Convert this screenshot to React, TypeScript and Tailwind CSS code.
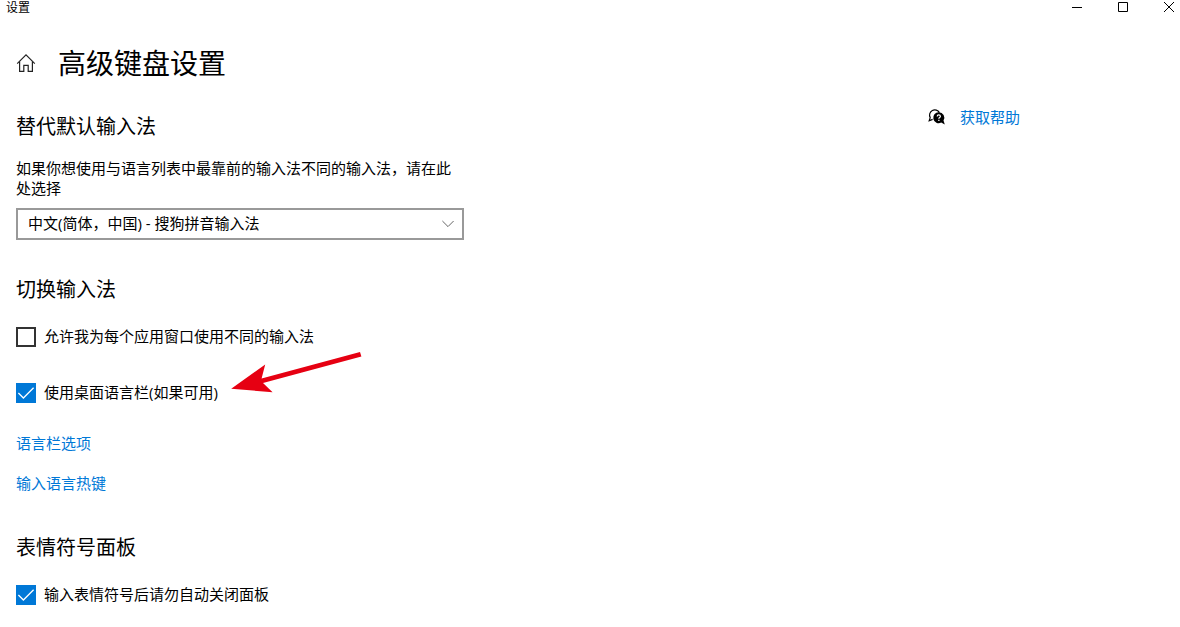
import { useState } from 'react'
import type { ReactNode } from 'react'

function HomeIcon() {
  return (
    <svg width="20" height="20" viewBox="0 0 20 20" fill="none" stroke="#222" strokeWidth="1.2">
      <path d="M1.2 10.6 10 1.8l8.8 8.8" />
      <path d="M3.6 8.6v9.8h4.2v-6h4.4v6h4.2V8.6" />
    </svg>
  )
}

function HelpIcon() {
  return (
    <svg width="18" height="18" viewBox="0 0 18 18" fill="none">
      <path d="M4.6 11.4 1.2 12.8l1-3.2A5.1 5.1 0 1 1 11.4 4.6" stroke="#000" strokeWidth="1.2" />
      <path d="M10.8 4.2a5.5 5.5 0 1 0 2.4 10.4l3.6 2-1.3-4A5.5 5.5 0 0 0 10.8 4.2Z" fill="#000" />
      <path d="M9.2 8.4c0-2 3.2-2 3.2 0 0 1.2-1.6 1.1-1.6 2.4" stroke="#fff" strokeWidth="1.2" />
      <path d="M10.2 11.8h1.3v1.3h-1.3z" fill="#fff" />
    </svg>
  )
}

function Arrow() {
  return (
    <svg
      className="absolute -top-9 left-52 pointer-events-none"
      width="144"
      height="48"
      viewBox="224 347 144 48"
      aria-hidden="true"
    >
      <path d="M231.2 388.8 265.2 364.4 261.6 378.6 360 351.9 361.4 356.5 263 383 272.6 392.2Z" fill="#e60012" />
    </svg>
  )
}

function TitleBar() {
  return (
    <div className="flex h-4 items-start justify-between pl-1.5">
      <span className="text-xs leading-4">设置</span>
      <div className="flex gap-6">
        <button type="button" aria-label="最小化" className="flex h-4 w-[22px] justify-center pt-0.5">
          <svg width="10" height="10" viewBox="0 0 10 10" stroke="#000">
            <path d="M0 5.5h10" />
          </svg>
        </button>
        <button type="button" aria-label="最大化" className="flex h-4 w-[22px] justify-center pt-0.5">
          <svg width="10" height="10" viewBox="0 0 10 10" fill="none" stroke="#000">
            <path d="M.5.5h9v9h-9z" />
          </svg>
        </button>
        <button type="button" aria-label="关闭" className="flex h-4 w-[22px] justify-center pt-0.5">
          <svg width="10" height="10" viewBox="0 0 10 10" stroke="#000">
            <path d="m0 0 10 10M10 0 0 10" />
          </svg>
        </button>
      </div>
    </div>
  )
}

function SectionTitle({ children }: { children: ReactNode }) {
  return <h2 className="text-xl leading-7">{children}</h2>
}

function CheckRow({ label, initial = false }: { label: string; initial?: boolean }) {
  const [checked, setChecked] = useState(initial)
  return (
    <label className="flex items-start gap-2 leading-[18px]">
      <span className="relative size-5 shrink-0">
        <input
          type="checkbox"
          checked={checked}
          onChange={(e) => setChecked(e.target.checked)}
          className="block size-5 appearance-none border-2 border-[#333] bg-white checked:border-[#0078d7] checked:bg-[#0078d7]"
        />
        {checked && (
          <svg className="absolute inset-0 pointer-events-none" width="20" height="20" viewBox="0 0 20 20" fill="none">
            <path d="m2.4 10 5 5L17.6 4.8" stroke="#fff" strokeWidth="1.3" />
          </svg>
        )}
      </span>
      {label}
    </label>
  )
}

export default function App() {
  return (
    <div className="min-h-screen bg-white text-[15px] text-black font-['Open_Sans','Noto_Sans_CJK_SC',sans-serif]" lang="zh-CN">
      <TitleBar />

      <header className="mt-[23px] flex h-12 items-center gap-[22px] px-4">
        <a href="#home" aria-label="主页">
          <HomeIcon />
        </a>
        <h1 className="text-[28px] leading-10">高级键盘设置</h1>
      </header>

      <div className="flex items-start justify-between pr-40 pl-4">
        <main className="w-[448px] pt-[26px] pb-5">
          <section>
            <SectionTitle>替代默认输入法</SectionTitle>
            <label htmlFor="default-ime" className="mt-[17px] block leading-5">
              如果你想使用与语言列表中最靠前的输入法不同的输入法，请在此处选择
            </label>
            <div className="relative mt-2.5">
              <select
                id="default-ime"
                className="block h-8 w-full appearance-none border-2 border-[#999] bg-white pr-8 pb-0.5 pl-2.5"
              >
                <option>中文(简体，中国) - 搜狗拼音输入法</option>
              </select>
              <svg
                className="absolute top-2.5 right-2.5 pointer-events-none"
                width="12"
                height="12"
                viewBox="0 0 12 12"
                fill="none"
                stroke="#666"
              >
                <path d="m.4 3 5.6 5.6L11.6 3" />
              </svg>
            </div>
          </section>

          <section className="mt-9">
            <SectionTitle>切换输入法</SectionTitle>
            <div className="mt-[23px]">
              <CheckRow label="允许我为每个应用窗口使用不同的输入法" />
            </div>
            <div className="relative mt-9">
              <CheckRow label="使用桌面语言栏(如果可用)" initial />
              <Arrow />
            </div>
            <div className="mt-[30px] flex flex-col items-start gap-5 leading-5 text-[#0078d7]">
              <a href="#language-bar">语言栏选项</a>
              <a href="#hotkeys">输入语言热键</a>
            </div>
          </section>

          <section className="mt-[41px]">
            <SectionTitle>表情符号面板</SectionTitle>
            <div className="mt-[23px]">
              <CheckRow label="输入表情符号后请勿自动关闭面板" initial />
            </div>
          </section>
        </main>

        <aside className="pt-5">
          <a href="#help" className="flex items-center gap-3.5 leading-5 text-[#0078d7]">
            <HelpIcon />
            获取帮助
          </a>
        </aside>
      </div>
    </div>
  )
}
